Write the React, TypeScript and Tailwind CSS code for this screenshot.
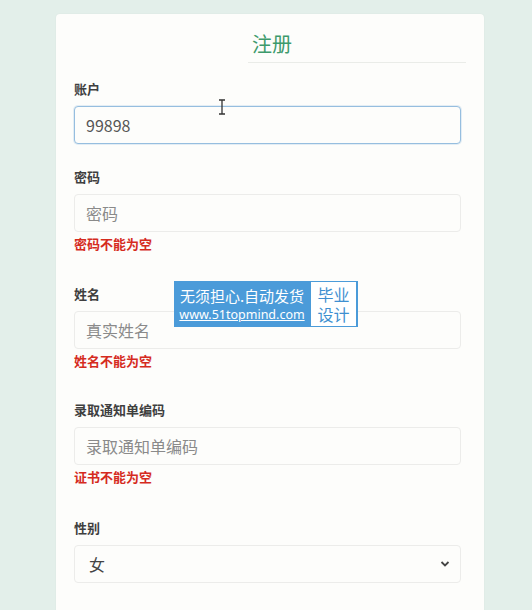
import React from "react";

const font = { fontFamily: '"Noto Sans CJK SC", "Noto Sans", sans-serif' };

function Label({ children }: { children: React.ReactNode }) {
  return (
    <div className="h-5 text-[13px] leading-5 font-bold text-[#3f3f3f]">{children}</div>
  );
}

function Err({ children }: { children: React.ReactNode }) {
  return (
    <div className="h-5 mt-[2px] text-[13px] leading-5 font-bold text-[#d52b1e]">{children}</div>
  );
}

function Field({ placeholder }: { placeholder: string }) {
  return (
    <div className="mt-[7px] h-[38px] w-[387px] rounded-[4px] border border-[#ececea] bg-[#fdfdfb] pl-[11px] pr-3 flex items-center text-[16px] text-[#8a8a8a]">
      {placeholder}
    </div>
  );
}

export default function App() {
  return (
    <div className="w-[532px] h-[610px] overflow-hidden bg-[#e3efea] relative" style={font}>
      <div className="ml-[56px] mt-[14px] w-[428px] h-[620px] rounded-t-[4px] bg-[#fdfdfb] shadow-[0_0_2px_rgba(0,0,0,0.06)] pl-[18px]">
        <div className="pt-[16px] ml-[174px] w-[218px] border-b border-[#eaece8] pb-[3px] h-[49px]">
          <div className="text-[20px] leading-[28px] text-[#3d9a6c] pl-[4px]">注册</div>
        </div>
        <div className="mt-[16px]">
          <Label>账户</Label>
          <div className="mt-[7px] h-[38px] w-[387px] rounded-[4px] border border-[#96bedf] bg-[#fdfdfb] pl-[11px] pr-3 flex items-center text-[16px] text-[#555] shadow-[0_0_0_1px_rgba(150,190,223,0.25)]">
            99898
          </div>
        </div>
        <div className="mt-[23px]">
          <Label>密码</Label>
          <Field placeholder="密码" />
          <Err>密码不能为空</Err>
        </div>
        <div className="mt-[30px]">
          <Label>姓名</Label>
          <Field placeholder="真实姓名" />
          <Err>姓名不能为空</Err>
        </div>
        <div className="mt-[29px]">
          <Label>录取通知单编码</Label>
          <Field placeholder="录取通知单编码" />
          <Err>证书不能为空</Err>
        </div>
        <div className="mt-[31px]">
          <Label>性别</Label>
          <div className="mt-[7px] h-[38px] w-[387px] rounded-[4px] border border-[#ececea] bg-[#fdfdfb] pl-[14px] pr-[10px] flex items-center justify-between text-[16px] text-[#444]">
            <span>女</span>
            <svg width="10" height="8" viewBox="0 0 10 8">
              <path d="M1.5 2 L5 5.5 L8.5 2" fill="none" stroke="#444" strokeWidth="1.8" />
            </svg>
          </div>
        </div>
      </div>

      {/* cursor */}
      <svg className="absolute left-[218px] top-[99px]" width="8" height="16" viewBox="0 0 8 16">
        <path d="M1 1 H7 M4 1 V15 M1 15 H7" fill="none" stroke="#333" strokeWidth="1.3" />
      </svg>

      {/* watermark */}
      <div className="absolute left-[174px] top-[281px] h-[46px] w-[184px] bg-[#4b9bd9] flex items-center">
        <div className="w-[136px] flex flex-col items-center">
          <div className="text-[15px] leading-[20px] text-white">无须担心.自动发货</div>
          <div className="text-[12.5px] leading-[17px] text-white underline" style={{ fontFamily: '"Noto Sans", sans-serif' }}>www.51topmind.com</div>
        </div>
        <div className="ml-[1px] h-[44px] w-[45px] bg-white flex items-center justify-center">
          <p className="text-center text-[16px] leading-[20px] text-[#3e8fd0]">
            毕业
            <br />
            设计
          </p>
        </div>
      </div>
    </div>
  );
}
